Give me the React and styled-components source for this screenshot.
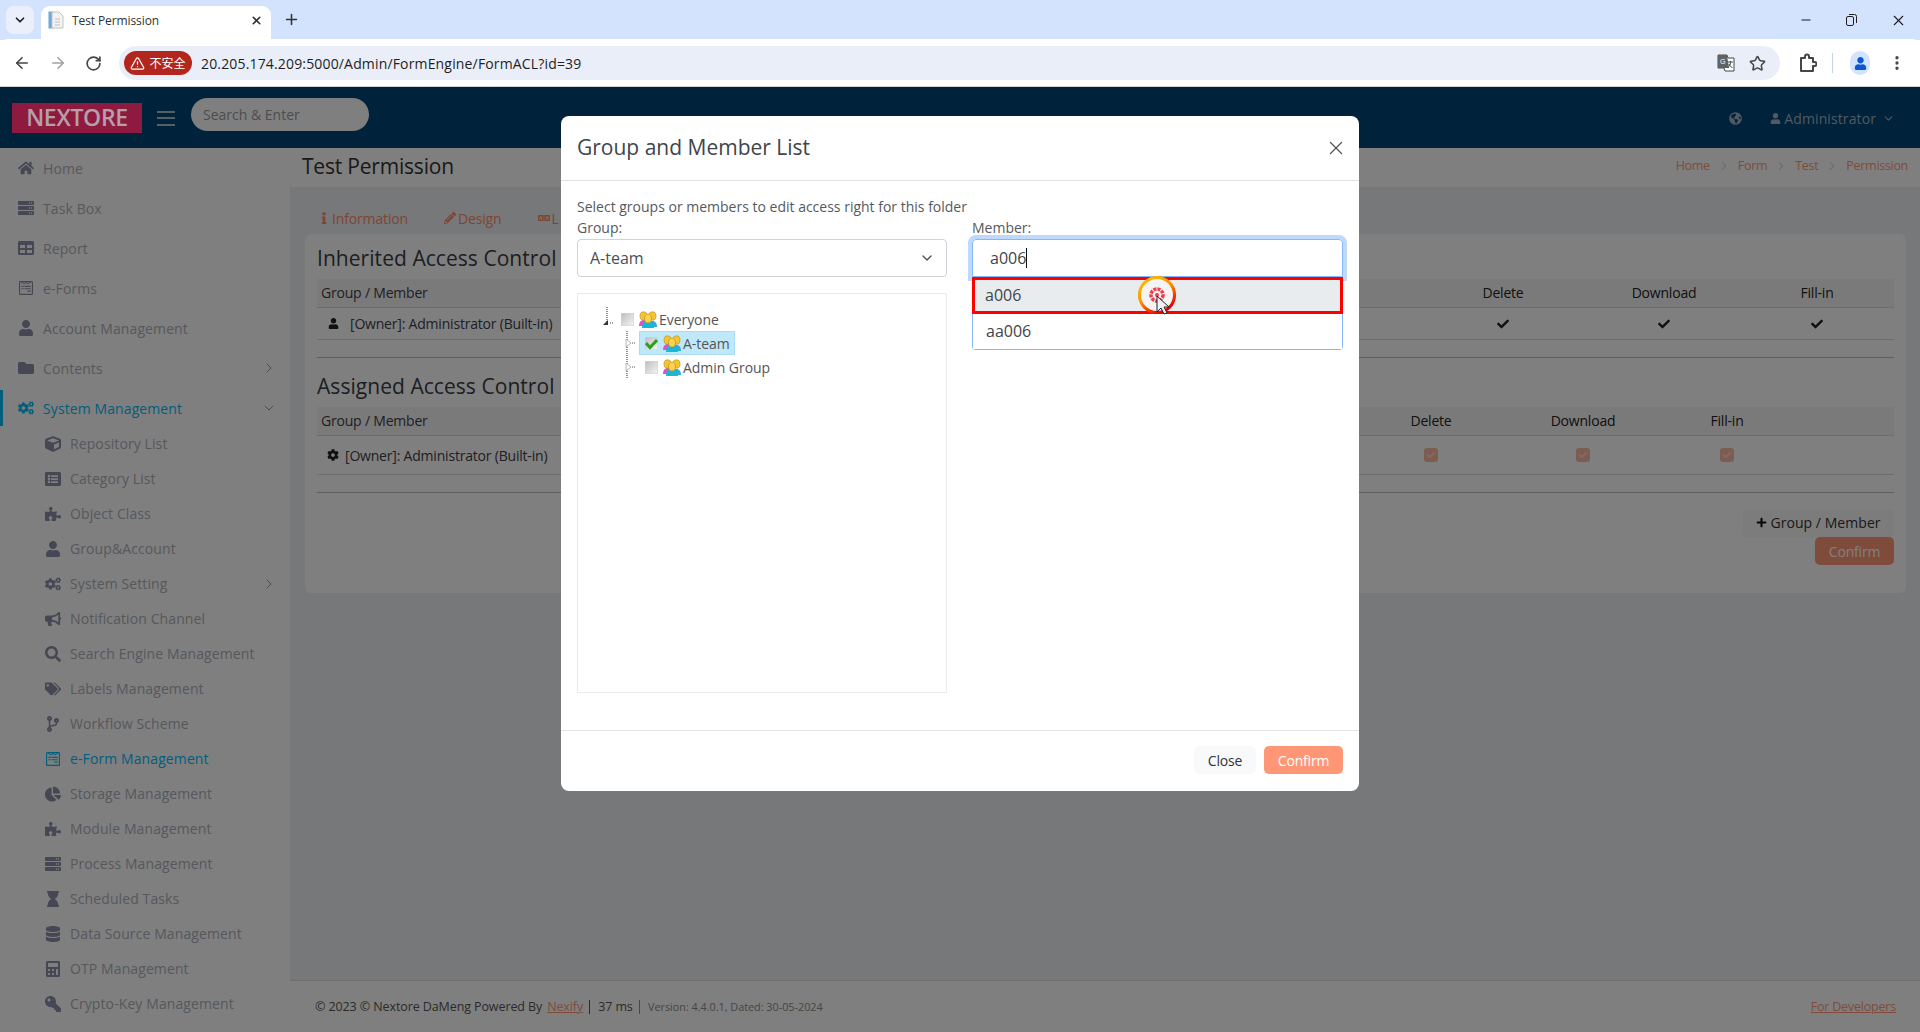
import React from "react";
import styled, { createGlobalStyle } from "styled-components";
import {
  ArrowLeft,
  ArrowRight,
  RotateCw,
  Star,
  X,
  Plus,
  ChevronDown,
  ChevronRight,
  Minus,
  TriangleAlert,
  EllipsisVertical,
} from "lucide-react";
import {
  FaHome,
  FaServer,
  FaTable,
  FaUser,
  FaFolder,
  FaCogs,
  FaCube,
  FaListAlt,
  FaPuzzlePiece,
  FaBullhorn,
  FaSearch,
  FaTags,
  FaCodeBranch,
  FaChartPie,
  FaHourglass,
  FaDatabase,
  FaCalculator,
  FaKey,
  FaWpforms,
  FaGlobeAmericas,
  FaInfo,
  FaPencilAlt,
  FaLanguage,
  FaCheck,
  FaCog,
  FaPlus,
} from "react-icons/fa";

const FONT = `"Open Sans", "Noto Sans", "Noto Sans CJK SC", sans-serif`;

const Global = createGlobalStyle`
  html, body { margin: 0; padding: 0; height: 100%; overflow: hidden; background: #fff; }
  * { box-sizing: border-box; }
  body { font-family: ${FONT}; font-size: 14px; }
`;

const Shell = styled.div`
  width: 1920px;
  height: 1032px;
  display: flex;
  flex-direction: column;
  overflow: hidden;
`;

/* browser chrome */
const TabStrip = styled.div`
  height: 40px;
  background: #d3e3fd;
  display: flex;
  align-items: flex-end;
  padding-left: 6px;
`;
const TabSearch = styled.div`
  width: 28px;
  height: 28px;
  margin-bottom: 6px;
  margin-right: 7px;
  border-radius: 8px;
  background: #e9f0fc;
  display: flex;
  align-items: center;
  justify-content: center;
  color: #1f1f1f;
`;
const Tab = styled.div`
  width: 230px;
  height: 34px;
  background: #fff;
  border-radius: 9px 9px 0 0;
  display: flex;
  align-items: center;
  padding: 0 8px 6px 7px;
  font-size: 12px;
  color: #303134;
  gap: 8px;
`;
const TabTitle = styled.span`
  flex: 1;
  letter-spacing: -0.1px;
`;
const NewTab = styled.div`
  margin: 0 0 12px 12px;
  color: #333;
  display: flex;
`;
const WindowControls = styled.div`
  margin-left: auto;
  display: flex;
  align-self: stretch;
  align-items: center;
  color: #1f1f1f;
  padding-right: 13px;
  gap: 33px;
`;
const Toolbar = styled.div`
  height: 48px;
  background: #fff;
  border-bottom: 1px solid #d3d3d3;
  border-radius: 8px 8px 0 0;
  margin-top: -1px;
  padding-top: 1px;
  display: flex;
  align-items: center;
  padding-left: 13px;
  color: #444746;
`;
const NavButton = styled.div`
  width: 18px;
  margin-right: 18px;
  display: flex;
  color: ${(p) => (p.$off ? "#a0a3a8" : "#444746")};
`;
const Omnibox = styled.div`
  width: 1661px;
  height: 34px;
  margin-left: -2px;
  border-radius: 17px;
  background: #e9eef8;
  display: flex;
  align-items: center;
  padding: 0 14px 0 5px;
`;
const InsecureChip = styled.div`
  width: 68px;
  height: 24px;
  border-radius: 12px;
  background: #b3261e;
  color: #fff;
  font-size: 12px;
  display: flex;
  align-items: center;
  justify-content: center;
  gap: 4px;
  margin-right: 9px;
`;
const Url = styled.span`
  font-size: 14px;
  color: #1f1f1f;
  letter-spacing: 0.16px;
`;
const OmniIcons = styled.div`
  margin-left: auto;
  display: flex;
  align-items: center;
  gap: 14px;
  color: #444746;
`;
const ToolIcons = styled.div`
  display: flex;
  align-items: center;
  margin-left: 19px;
`;
const ToolSep = styled.div`
  width: 1px;
  height: 20px;
  background: #c5d3ea;
  margin: 0 17px 0 15px;
`;
const Avatar = styled.div`
  width: 20px;
  height: 24px;
  border-radius: 10px;
  background: #d3e3fd;
  display: flex;
  align-items: center;
  justify-content: center;
  margin-right: 18px;
`;

/* application page */
const Page = styled.div`
  position: relative;
  flex: 1;
  display: flex;
  flex-direction: column;
  min-height: 0;
`;
const Topbar = styled.header`
  height: 61px;
  background: #004474;
  display: flex;
  align-items: center;
  padding: 0 25px 0 12px;
`;
const Logo = styled.div`
  position: relative;
  z-index: 20;
  width: 130px;
  height: 30px;
  background: #8e1a40;
  color: #b5a0a8;
  font-size: 23px;
  font-weight: 600;
  letter-spacing: -0.3px;
  display: flex;
  align-items: center;
  justify-content: center;
  padding-bottom: 1px;
`;
const Burger = styled.div`
  width: 18px;
  height: 15px;
  margin-left: 15px;
  margin-top: 1px;
  border-top: 2px solid #a9c0cf;
  border-bottom: 2px solid #a9c0cf;
  display: flex;
  align-items: center;
  &::before {
    content: "";
    display: block;
    width: 100%;
    height: 2px;
    background: #a9c0cf;
  }
`;
const SearchBox = styled.div`
  width: 178px;
  height: 33px;
  margin-left: 16px;
  margin-top: -6px;
  border-radius: 17px;
  background: #fff;
  color: #9b9b9b;
  padding-left: 12px;
  display: flex;
  align-items: center;
  font-size: 14px;
`;
const TopRight = styled.div`
  margin-left: auto;
  display: flex;
  align-items: center;
  color: #9fb4c4;
  font-size: 14px;
  letter-spacing: 0.1px;
  padding-top: 2px;
`;
const Workspace = styled.div`
  flex: 1;
  display: flex;
  min-height: 0;
`;
const Sidebar = styled.nav`
  width: 290px;
  flex-shrink: 0;
  background: #fff;
  overflow: hidden;
`;
const MenuRow = styled.div`
  height: ${(p) => (p.$sub ? 35 : p.$bar ? 36 : 40)}px;
  margin-top: ${(p) => (p.$bar ? 2 : 0)}px;
  display: flex;
  align-items: center;
  padding-left: ${(p) => (p.$sub ? 45 : 18)}px;
  padding-right: 13px;
  color: ${(p) => (p.$on ? "#00bcff" : "#adb0ba")};
  letter-spacing: 0.1px;
  box-shadow: ${(p) => (p.$bar ? "inset 3px 0 0 #00bcff" : "none")};
  & > svg:first-child {
    width: 16px;
    height: 16px;
    color: ${(p) => (p.$on ? "#00bcff" : "#8a90a8")};
    flex-shrink: 0;
  }
`;
const MenuLabel = styled.span`
  margin-left: 9px;
  flex: 1;
  white-space: nowrap;
`;
const FlippedKey = styled(FaKey)`
  transform: scaleX(-1);
`;
const Main = styled.main`
  flex: 1;
  display: flex;
  flex-direction: column;
  background: #eef0f4;
  min-width: 0;
`;
const TitleBand = styled.div`
  height: 39px;
  background: #fff;
  display: flex;
  align-items: center;
  padding: 0 12px 4px 12px;
`;
const PageTitle = styled.h1`
  margin: 0;
  font-size: 21px;
  font-weight: 400;
  color: #333;
  letter-spacing: -0.2px;
`;
const Breadcrumb = styled.div`
  margin-left: auto;
  display: flex;
  align-items: center;
  gap: 7px;
  font-size: 12.5px;
  color: #ff9776;
  letter-spacing: -0.3px;
  & svg { color: #b0b0b0; }
`;
const Tabs = styled.div`
  height: 47px;
  display: flex;
  align-items: center;
  padding: 15px 0 0 28px;
  gap: 36px;
`;
const TabLink = styled.span`
  display: flex;
  align-items: center;
  gap: 2px;
  color: #ff8a66;
  letter-spacing: -0.15px;
  & svg { width: 12px; height: 12px; }
`;
const Card = styled.section`
  margin: 0 14px 0 15px;
  background: #fff;
  border-radius: 6px;
  padding: 0 12px 28px;
`;
const CardHeading = styled.h2`
  margin: 0;
  padding-top: ${(p) => p.$top}px;
  height: ${(p) => p.$h}px;
  display: flex;
  align-items: center;
  font-size: 21px;
  font-weight: 400;
  color: #3a3d44;
  letter-spacing: 0.05px;
`;
const TableRow = styled.div`
  display: grid;
  grid-template-columns: ${(p) => p.$cols};
  height: ${(p) => p.$h}px;
  padding-bottom: ${(p) => (p.$head ? 2 : 0)}px;
  align-items: center;
  background: ${(p) => (p.$head ? "#f5f5f5" : "#fff")};
  border-bottom: 1px solid #dcdcdc;
  color: #3c4048;
  letter-spacing: -0.2px;
`;
const CellFirst = styled.div`
  display: flex;
  align-items: center;
  padding-left: ${(p) => p.$pad}px;
  gap: ${(p) => p.$gap || 0}px;
  white-space: nowrap;
`;
const CellCenter = styled.div`
  display: flex;
  justify-content: center;
  color: #222;
`;
const MiniCheck = styled.div`
  width: 14px;
  height: 14px;
  border-radius: 3px;
  background: #ffb8a0;
  color: #f0e0dc;
  display: flex;
  align-items: center;
  justify-content: center;
`;
const Divider = styled.hr`
  border: 0;
  border-top: 1px solid #bdbdbd;
  margin: 17px 0 0;
`;
const CardActions = styled.div`
  margin-top: 16px;
  display: flex;
  flex-direction: column;
  align-items: flex-end;
`;
const GhostButton = styled.div`
  width: 151px;
  height: 28px;
  padding-bottom: 2px;
  border-radius: 4px;
  background: #f8f9fa;
  color: #333;
  display: flex;
  align-items: center;
  justify-content: center;
  gap: 3px;
  letter-spacing: 0.05px;
`;
const PrimaryButton = styled.div`
  width: ${(p) => p.$w}px;
  height: 28px;
  border-radius: 5px;
  background: #ff9776;
  color: #fff;
  display: flex;
  align-items: center;
  justify-content: center;
  letter-spacing: -0.2px;
`;
const Footer = styled.footer`
  margin-top: auto;
  height: 52px;
  background: #fff;
  border-top: 1px solid #dedede;
  display: flex;
  align-items: center;
  padding: 0 24px 0 25px;
  font-size: 12.5px;
  color: #555;
  letter-spacing: -0.1px;
`;
const FooterLink = styled.a`
  color: #ff9776;
  text-decoration: underline;
  margin: 0 6px 0 5px;
`;
const FooterSep = styled.span`
  width: 1px;
  height: 14px;
  margin: 0 8px 0 0;
  background: ${(p) => p.$c || "#555"};
`;
const VersionText = styled.span`
  font-size: 10.8px;
  letter-spacing: 0;
  color: #8a8a8a;
`;
const DevLink = styled.a`
  margin-left: auto;
  color: #ff9776;
  text-decoration: underline;
  letter-spacing: -0.2px;
`;

/* modal */
const Backdrop = styled.div`
  position: absolute;
  inset: 0;
  z-index: 10;
  background: rgba(0, 0, 0, 0.5);
  display: flex;
  justify-content: center;
  align-items: flex-start;
  padding-top: 29px;
`;
const Modal = styled.div`
  width: 798px;
  height: 675px;
  background: #fff;
  border-radius: 8px;
  display: flex;
  flex-direction: column;
  color: #555a60;
`;
const ModalHeader = styled.div`
  height: 65px;
  border-bottom: 1px solid #dee2e6;
  display: flex;
  align-items: center;
  padding: 0 16px 2px;
`;
const ModalTitle = styled.h3`
  margin: 0;
  flex: 1;
  font-size: 21px;
  font-weight: 400;
  color: #40454a;
`;
const CloseX = styled.div`
  display: flex;
  color: #555;
  margin-right: -4px;
  margin-top: 2px;
`;
const ModalBody = styled.div`
  flex: 1;
  padding: 15px 16px 0;
  line-height: 21px;
`;
const Columns = styled.div`
  display: grid;
  grid-template-columns: 370px 371px;
  column-gap: 25px;
`;
const SelectBox = styled.div`
  height: 38px;
  margin-top: 1px;
  border: 1px solid #ced4da;
  border-radius: 4px;
  display: flex;
  align-items: center;
  padding: 0 11px 0 12px;
  font-size: 16px;
  color: #495057;
  & span { flex: 1; }
`;
const TreeBox = styled.div`
  margin-top: 16px;
  height: 400px;
  border: 1px solid #e9ecef;
  padding: 13px 0 0 25px;
`;
const TreeRow = styled.div`
  height: 24px;
  display: flex;
  align-items: center;
  padding-left: ${(p) => p.$indent}px;
  position: relative;
`;
const TreeNode = styled.div`
  display: flex;
  align-items: center;
  height: 24px;
  padding: 0 4px 0 5px;
  border: 1px solid ${(p) => (p.$on ? "#a8dcf5" : "transparent")};
  background: ${(p) => (p.$on ? "#bfe8fb" : "transparent")};
  font-size: 14px;
  color: #555;
  letter-spacing: -0.05px;
  & > svg:nth-child(2) {
    margin-right: 2px;
  }
`;
const Expander = styled.div`
  width: ${(p) => p.$w}px;
  display: flex;
`;
const InputBox = styled.div`
  height: 38px;
  margin-top: 1px;
  border: 1px solid #86b7fe;
  border-radius: 4px 4px 0 0;
  box-shadow: 0 0 0 4px #bfd8fe;
  display: flex;
  align-items: center;
  padding-left: 17px;
  font-size: 16px;
  color: #40454a;
`;
const Caret = styled.span`
  width: 1px;
  height: 20px;
  background: #111;
`;
const Suggestions = styled.div`
  position: relative;
  z-index: 1;
  background: #fff;
  border: 1px solid #86b7fe;
  border-top: 0;
  border-radius: 0 0 4px 4px;
  font-size: 16px;
  color: #40454a;
`;
const Suggestion = styled.div`
  height: ${(p) => (p.$on ? 37 : 35)}px;
  display: flex;
  align-items: center;
  padding-left: 13px;
  background: ${(p) => (p.$on ? "#e9ecef" : "#fff")};
  outline: ${(p) => (p.$on ? "3px solid #ff0000" : "none")};
  outline-offset: -3px;
  margin: ${(p) => (p.$on ? "0 -1px" : "0")};
`;
const ClickHalo = styled.svg`
  position: absolute;
  left: 163px;
  top: -3px;
  width: 42px;
  height: 50px;
`;
const ModalFooter = styled.div`
  height: 61px;
  border-top: 1px solid #e3e3e3;
  display: flex;
  justify-content: flex-end;
  align-items: flex-start;
  padding: 15px 16px 0;
  gap: 8px;
`;
const CloseButton = styled.div`
  width: 62px;
  height: 28px;
  border-radius: 5px;
  background: #f8f9fa;
  color: #333;
  display: flex;
  align-items: center;
  justify-content: center;
  letter-spacing: -0.2px;
`;

const menu = [
  { label: "Home", icon: FaHome },
  { label: "Task Box", icon: FaServer },
  { label: "Report", icon: FaTable },
  { label: "e-Forms", icon: FaWpforms },
  { label: "Account Management", icon: FaUser },
  { label: "Contents", icon: FaFolder, more: "right" },
  { label: "System Management", icon: FaCogs, more: "down", on: true, bar: true },
  { label: "Repository List", icon: FaCube, sub: true },
  { label: "Category List", icon: FaListAlt, sub: true },
  { label: "Object Class", icon: FaPuzzlePiece, sub: true },
  { label: "Group&Account", icon: FaUser, sub: true },
  { label: "System Setting", icon: FaCogs, sub: true, more: "right" },
  { label: "Notification Channel", icon: FaBullhorn, sub: true },
  { label: "Search Engine Management", icon: FaSearch, sub: true },
  { label: "Labels Management", icon: FaTags, sub: true },
  { label: "Workflow Scheme", icon: FaCodeBranch, sub: true },
  { label: "e-Form Management", icon: FaWpforms, sub: true, on: true },
  { label: "Storage Management", icon: FaChartPie, sub: true },
  { label: "Module Management", icon: FaPuzzlePiece, sub: true },
  { label: "Process Management", icon: FaServer, sub: true },
  { label: "Scheduled Tasks", icon: FaHourglass, sub: true },
  { label: "Data Source Management", icon: FaDatabase, sub: true },
  { label: "OTP Management", icon: FaCalculator, sub: true },
  { label: "Crypto-Key Management", icon: FlippedKey, sub: true },
];

const INHERITED_COLS = "1fr 170px 152px 154px";
const ASSIGNED_COLS = "1fr 170px 134px 154px 90px";

function PageFile() {
  return (
    <svg width="16" height="18" viewBox="0 0 16 18">
      <rect x="0.5" y="0.5" width="5" height="17" fill="#6fa8dc" />
      <path d="M4 1h7l4 4v12H4z" fill="#f3f3f3" stroke="#c4c4c4" />
      <path d="M7 8h5M7 11h5M7 14h5" stroke="#bdbdbd" />
    </svg>
  );
}

function TranslateIcon() {
  return (
    <svg width="18" height="18" viewBox="0 0 18 18">
      <path d="M1 1h9l1 3h6v13H8l-1-3H1z" fill="#fff" stroke="#444746" />
      <path d="M1 1h9l2 13H1z" fill="#5f6368" />
      <text x="3" y="10" fontSize="7" fill="#fff" fontFamily="Liberation Sans">G</text>
      <path d="M11 8h5M13.5 7v1.5c0 2-1 4-3 5M12 10c.6 1.6 1.8 3 3.5 3.6" stroke="#444746" fill="none" />
    </svg>
  );
}

function ExtensionIcon() {
  return (
    <svg width="18" height="20" viewBox="0 0 18 20" fill="none" stroke="#444746" strokeWidth="2">
      <path d="M2 5h4V3.5a2 2 0 0 1 4 0V5h4v4h1.5a2 2 0 0 1 0 4H14v5H2z" strokeLinejoin="round" />
    </svg>
  );
}

function RestoreIcon() {
  return (
    <svg width="11" height="12" viewBox="0 0 11 12" fill="none" stroke="#1f1f1f">
      <rect x="0.5" y="2.5" width="7" height="9" rx="1.5" />
      <path d="M3 .5h5.5a2 2 0 0 1 2 2V9" />
    </svg>
  );
}

function GroupIcon() {
  return (
    <svg width="18" height="17" viewBox="0 0 18 17">
      <path d="M0 15c0-4 2-6 5-6s5 2 5 6z" fill="#e44fd0" />
      <path d="M9 16c0-4 2-6 4.500-6S18 12 18 16z" fill="#2fa9e0" />
      <path d="M3 17c0-5 2.500-8 6-8s6 3 6 8z" fill="#19b7d6" />
      <ellipse cx="4.500" cy="5" rx="3.500" ry="4.200" fill="#f5c431" stroke="#b98a10" strokeWidth="0.6" />
      <ellipse cx="13.500" cy="5" rx="3.500" ry="4.200" fill="#f5c431" stroke="#b98a10" strokeWidth="0.6" />
      <ellipse cx="9" cy="7.500" rx="3.500" ry="4.500" fill="#fbd24c" stroke="#b98a10" strokeWidth="0.6" />
    </svg>
  );
}

function TreeCheck({ checked }) {
  return (
    <svg width="13" height="13" viewBox="0 0 13 13" style={{ marginRight: 5 }}>
      <defs>
        <linearGradient id="tc" x1="0" y1="0" x2="1" y2="1">
          <stop offset="0" stopColor="#bdbdbd" />
          <stop offset="1" stopColor="#f6f6f6" />
        </linearGradient>
      </defs>
      <rect width="13" height="13" fill="url(#tc)" stroke="#d0d0d0" />
      {checked && <path d="M1 6l4 4.500L12 3" fill="none" stroke="#2e9e1f" strokeWidth="3" />}
    </svg>
  );
}

function OpenArrow() {
  return (
    <svg width="18" height="24" viewBox="0 0 18 24" style={{ flexShrink: 0 }}>
      <path d="M4 0v16" stroke="#222" strokeDasharray="1 1" />
      <path d="M0 18L5 13v5z" fill="#333" />
      <path d="M7 16h4" stroke="#333" strokeDasharray="1 1" />
    </svg>
  );
}

function ClosedArrow() {
  return (
    <svg width="18" height="24" viewBox="0 0 18 24">
      <path d="M6 0v24" stroke="#222" strokeDasharray="1 1" />
      <path d="M5 8l5 4-5 4z" fill="#fff" stroke="#b5b5b5" />
      <path d="M11 12h4" stroke="#555" strokeDasharray="1 1" />
    </svg>
  );
}

function Halo() {
  return (
    <ClickHalo viewBox="0 0 42 50">
      <defs>
        <linearGradient id="ring" x1="0" y1="0" x2="0.6" y2="1">
          <stop offset="0" stopColor="#ffc400" />
          <stop offset="0.5" stopColor="#ff9a00" />
          <stop offset="1" stopColor="#f00000" />
        </linearGradient>
      </defs>
      <circle cx="21" cy="21" r="18.500" fill="#111" />
      <circle cx="21" cy="21" r="17.500" fill="#f4f4f4" stroke="url(#ring)" strokeWidth="3" />
      <circle cx="21" cy="21" r="6" fill="none" stroke="#f43b4a" strokeWidth="3.500" strokeDasharray="3 1" />
      <circle cx="21" cy="21" r="2" fill="#f43b4a" />
      <path d="M21 22v16l4-4 3 6 3-1-3-6h5z" fill="#f0f0f0" stroke="#1d2230" strokeWidth="1" />
    </ClickHalo>
  );
}

export default function App() {
  return (
    <Shell>
      <Global />
      <TabStrip>
        <TabSearch>
          <ChevronDown size={14} strokeWidth={3} />
        </TabSearch>
        <Tab>
          <PageFile />
          <TabTitle>Test Permission</TabTitle>
          <X size={13} strokeWidth={3} color="#333" />
        </Tab>
        <NewTab>
          <Plus size={17} strokeWidth={2.2} />
        </NewTab>
        <WindowControls>
          <Minus size={14} />
          <RestoreIcon />
          <X size={17} strokeWidth={1.6} />
        </WindowControls>
      </TabStrip>
      <Toolbar>
        <NavButton><ArrowLeft size={18} strokeWidth={2.2} /></NavButton>
        <NavButton $off><ArrowRight size={18} strokeWidth={2.2} /></NavButton>
        <NavButton><RotateCw size={17} strokeWidth={2.4} /></NavButton>
        <Omnibox>
          <InsecureChip>
            <TriangleAlert size={15} />
            不安全
          </InsecureChip>
          <Url>20.205.174.209:5000/Admin/FormEngine/FormACL?id=39</Url>
          <OmniIcons>
            <TranslateIcon />
            <Star size={17} strokeWidth={2.2} />
          </OmniIcons>
        </Omnibox>
        <ToolIcons>
          <ExtensionIcon />
          <ToolSep />
          <Avatar><FaUser size={13} color="#0b57d0" /></Avatar>
          <EllipsisVertical size={18} strokeWidth={2.4} />
        </ToolIcons>
      </Toolbar>

      <Page>
        <Topbar>
          <Logo>NEXTORE</Logo>
          <Burger />
          <SearchBox>Search &amp; Enter</SearchBox>
          <TopRight>
            <FaGlobeAmericas size={13} style={{ marginRight: 28 }} />
            <FaUser size={11} style={{ marginRight: 3 }} />
            Administrator
            <ChevronDown size={13} style={{ marginLeft: 6 }} />
          </TopRight>
        </Topbar>
        <Workspace>
          <Sidebar>
            {menu.map((m) => {
              const Icon = m.icon;
              return (
                <MenuRow key={m.label} $sub={m.sub} $on={m.on} $bar={m.bar}>
                  <Icon />
                  <MenuLabel>{m.label}</MenuLabel>
                  {m.more === "right" && <ChevronRight size={16} strokeWidth={1.4} color="#8a8f9c" />}
                  {m.more === "down" && <ChevronDown size={16} strokeWidth={1.4} color="#8a8f9c" />}
                </MenuRow>
              );
            })}
          </Sidebar>
          <Main>
            <TitleBand>
              <PageTitle>Test Permission</PageTitle>
              <Breadcrumb>
                Home <ChevronRight size={14} strokeWidth={1.2} />
                Form <ChevronRight size={14} strokeWidth={1.2} />
                Test <ChevronRight size={14} strokeWidth={1.2} />
                Permission
              </Breadcrumb>
            </TitleBand>
            <Tabs>
              <TabLink><FaInfo />Information</TabLink>
              <TabLink><FaPencilAlt />Design</TabLink>
              <TabLink><FaLanguage />L</TabLink>
            </Tabs>
            <Card>
              <CardHeading $top={3} $h={45}>Inherited Access Control</CardHeading>
              <TableRow $head $cols={INHERITED_COLS} $h={29}>
                <CellFirst $pad={4}>Group / Member</CellFirst>
                <CellCenter>Delete</CellCenter>
                <CellCenter>Download</CellCenter>
                <CellCenter>Fill-in</CellCenter>
              </TableRow>
              <TableRow $cols={INHERITED_COLS} $h={32}>
                <CellFirst $pad={11} $gap={11}>
                  <FaUser size={11} color="#222" />
                  [Owner]: Administrator (Built-in)
                </CellFirst>
                <CellCenter><FaCheck size={12} /></CellCenter>
                <CellCenter><FaCheck size={12} /></CellCenter>
                <CellCenter><FaCheck size={12} /></CellCenter>
              </TableRow>
              <Divider />
              <CardHeading $top={7} $h={49}>Assigned Access Control</CardHeading>
              <TableRow $head $cols={ASSIGNED_COLS} $h={29}>
                <CellFirst $pad={4}>Group / Member</CellFirst>
                <CellCenter>Delete</CellCenter>
                <CellCenter>Download</CellCenter>
                <CellCenter>Fill-in</CellCenter>
                <span />
              </TableRow>
              <TableRow $cols={ASSIGNED_COLS} $h={39}>
                <CellFirst $pad={10} $gap={6}>
                  <FaCog size={12} color="#222" />
                  [Owner]: Administrator (Built-in)
                </CellFirst>
                <CellCenter><MiniCheck><FaCheck size={8} /></MiniCheck></CellCenter>
                <CellCenter><MiniCheck><FaCheck size={8} /></MiniCheck></CellCenter>
                <CellCenter><MiniCheck><FaCheck size={8} /></MiniCheck></CellCenter>
                <span />
              </TableRow>
              <Divider />
              <CardActions>
                <GhostButton><FaPlus size={11} color="#111" />Group / Member</GhostButton>
                <PrimaryButton $w={79}>Confirm</PrimaryButton>
              </CardActions>
            </Card>
            <Footer>
              © 2023 © Nextore DaMeng Powered By
              <FooterLink>Nexify </FooterLink>
              <FooterSep />
              37 ms&nbsp;&nbsp;
              <FooterSep $c="#5a9bd0" />
              <VersionText>Version: 4.4.0.1, Dated: 30-05-2024</VersionText>
              <DevLink>For Developers</DevLink>
            </Footer>
          </Main>
        </Workspace>

        <Backdrop>
          <Modal>
            <ModalHeader>
              <ModalTitle>Group and Member List</ModalTitle>
              <CloseX><X size={22} strokeWidth={1.4} /></CloseX>
            </ModalHeader>
            <ModalBody>
              Select groups or members to edit access right for this folder
              <Columns>
                <div>
                  Group:
                  <SelectBox>
                    <span>A-team</span>
                    <ChevronDown size={16} strokeWidth={2} />
                  </SelectBox>
                  <TreeBox>
                    <TreeRow $indent={0}>
                      <Expander $w={12}><OpenArrow /></Expander>
                      <TreeNode><TreeCheck /><GroupIcon />Everyone</TreeNode>
                    </TreeRow>
                    <TreeRow $indent={18}>
                      <Expander $w={18}><ClosedArrow /></Expander>
                      <TreeNode $on><TreeCheck checked /><GroupIcon />A-team</TreeNode>
                    </TreeRow>
                    <TreeRow $indent={18}>
                      <Expander $w={18}><ClosedArrow /></Expander>
                      <TreeNode><TreeCheck /><GroupIcon />Admin Group</TreeNode>
                    </TreeRow>
                  </TreeBox>
                </div>
                <div>
                  Member:
                  <InputBox>a006<Caret /></InputBox>
                  <Suggestions>
                    <Suggestion $on>a006</Suggestion>
                    <Suggestion>aa006</Suggestion>
                    <Halo />
                  </Suggestions>
                </div>
              </Columns>
            </ModalBody>
            <ModalFooter>
              <CloseButton>Close</CloseButton>
              <PrimaryButton $w={79}>Confirm</PrimaryButton>
            </ModalFooter>
          </Modal>
        </Backdrop>
      </Page>
    </Shell>
  );
}
